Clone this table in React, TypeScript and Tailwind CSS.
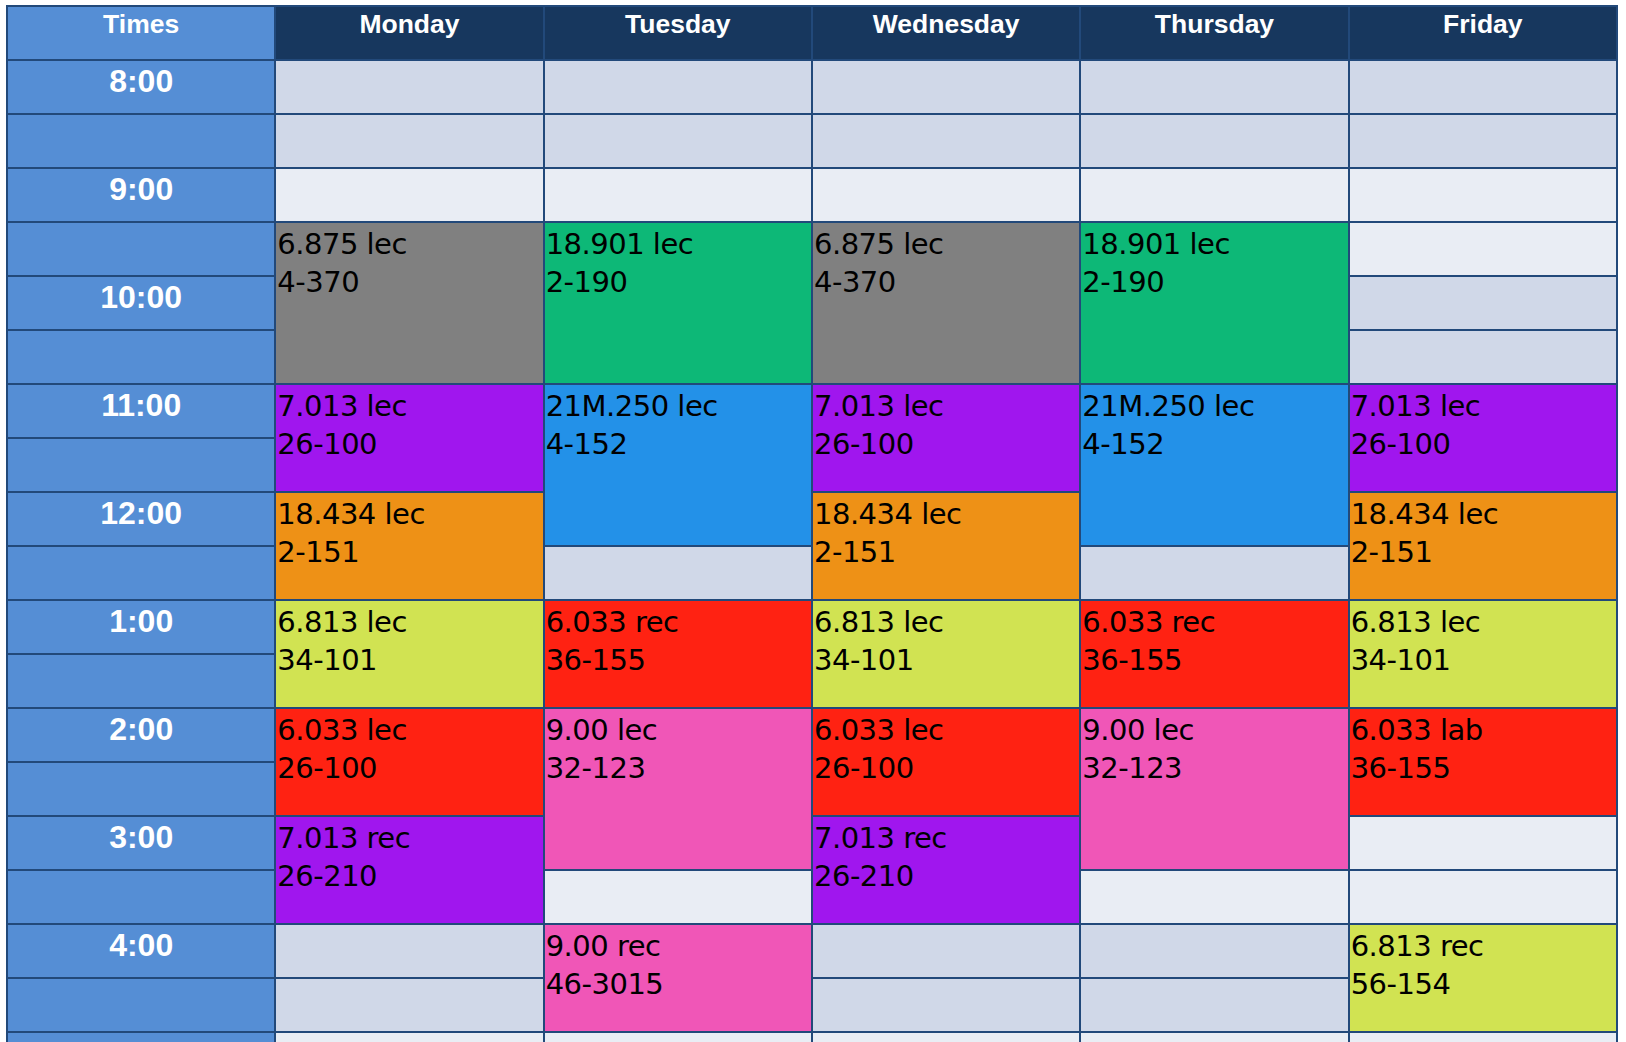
import React from "react";

type Seg = { span: number; color?: string; l1?: string; l2?: string };

const GRAY = "bg-[#808080]";
const GREEN = "bg-[#0db877]";
const BLUE = "bg-[#2391e8]";
const PURPLE = "bg-[#a016ee]";
const ORANGE = "bg-[#ee9116]";
const LIME = "bg-[#d1e352]";
const RED = "bg-[#ff2212]";
const PINK = "bg-[#f056b7]";

const E: Seg = { span: 1 };
const B = (span: number, color: string, l1: string, l2: string): Seg => ({ span, color, l1, l2 });

const mon: Seg[] = [
  E, E, E,
  B(3, GRAY, "6.875 lec", "4-370"),
  B(2, PURPLE, "7.013 lec", "26-100"),
  B(2, ORANGE, "18.434 lec", "2-151"),
  B(2, LIME, "6.813 lec", "34-101"),
  B(2, RED, "6.033 lec", "26-100"),
  B(2, PURPLE, "7.013 rec", "26-210"),
  E, E, E, E,
];

const tue: Seg[] = [
  E, E, E,
  B(3, GREEN, "18.901 lec", "2-190"),
  B(3, BLUE, "21M.250 lec", "4-152"),
  E,
  B(2, RED, "6.033 rec", "36-155"),
  B(3, PINK, "9.00 lec", "32-123"),
  E,
  B(2, PINK, "9.00 rec", "46-3015"),
  E, E,
];

const thu: Seg[] = [
  E, E, E,
  B(3, GREEN, "18.901 lec", "2-190"),
  B(3, BLUE, "21M.250 lec", "4-152"),
  E,
  B(2, RED, "6.033 rec", "36-155"),
  B(3, PINK, "9.00 lec", "32-123"),
  E,
  E, E,
  E, E,
];

const fri: Seg[] = [
  E, E, E, E, E, E,
  B(2, PURPLE, "7.013 lec", "26-100"),
  B(2, ORANGE, "18.434 lec", "2-151"),
  B(2, LIME, "6.813 lec", "34-101"),
  B(2, RED, "6.033 lab", "36-155"),
  E, E,
  B(2, LIME, "6.813 rec", "56-154"),
  E, E,
];

const days: { name: string; segs: Seg[] }[] = [
  { name: "Monday", segs: mon },
  { name: "Tuesday", segs: tue },
  { name: "Wednesday", segs: mon },
  { name: "Thursday", segs: thu },
  { name: "Friday", segs: fri },
];

const heights: Record<number, string> = {
  1: "h-[52px]",
  2: "h-[106px]",
  3: "h-[160px]",
};

const times = ["8:00", "9:00", "10:00", "11:00", "12:00", "1:00", "2:00", "3:00", "4:00", "5:00"];

const bodyFont = { fontFamily: "'DejaVu Sans', 'Liberation Sans', sans-serif" };
const boldFont = { fontFamily: "'Liberation Sans', Arial, sans-serif" };

function DayColumn({ name, segs }: { name: string; segs: Seg[] }) {
  let row = 0;
  return (
    <div className="flex flex-1 min-w-0 flex-col gap-[2px]">
      <div
        className="h-[52px] bg-[#17375e] pt-[1px] text-center text-[26.5px] font-bold leading-[33px] text-white"
        style={boldFont}
      >
        {name}
      </div>
      {segs.map((s, i) => {
        const r = row;
        row += s.span;
        if (!s.color) {
          const dark = Math.floor(r / 2) % 2 === 0;
          return (
            <div
              key={i}
              className={`h-[52px] shrink-0 ${dark ? "bg-[#d0d8e8]" : "bg-[#e9edf4]"}`}
            />
          );
        }
        return (
          <div
            key={i}
            className={`${heights[s.span]} shrink-0 ${s.color} pl-[1px] pt-[2px] text-[29px] leading-[38px] tracking-[-0.5px] text-black`}
          >
            <div>{s.l1}</div>
            <div>{s.l2}</div>
          </div>
        );
      })}
    </div>
  );
}

export default function App() {
  return (
    <div className="min-h-screen bg-white pl-[6px] pt-[5px]" style={bodyFont}>
      <div className="flex w-[1612px] gap-[2px] bg-[#22497a] p-[2px]">
        <div className="flex flex-1 min-w-0 flex-col gap-[2px]" style={boldFont}>
          <div className="h-[52px] bg-[#558ed5] pt-[1px] text-center text-[26.5px] font-bold leading-[33px] text-white">
            Times
          </div>
          {times.map((t) => (
            <React.Fragment key={t}>
              <div className="h-[52px] shrink-0 bg-[#558ed5] pt-[2px] text-center text-[32px] font-bold leading-[36px] text-white">
                {t}
              </div>
              <div className="h-[52px] shrink-0 bg-[#558ed5]" />
            </React.Fragment>
          ))}
        </div>
        {days.map((d) => (
          <DayColumn key={d.name} name={d.name} segs={d.segs} />
        ))}
      </div>
    </div>
  );
}
